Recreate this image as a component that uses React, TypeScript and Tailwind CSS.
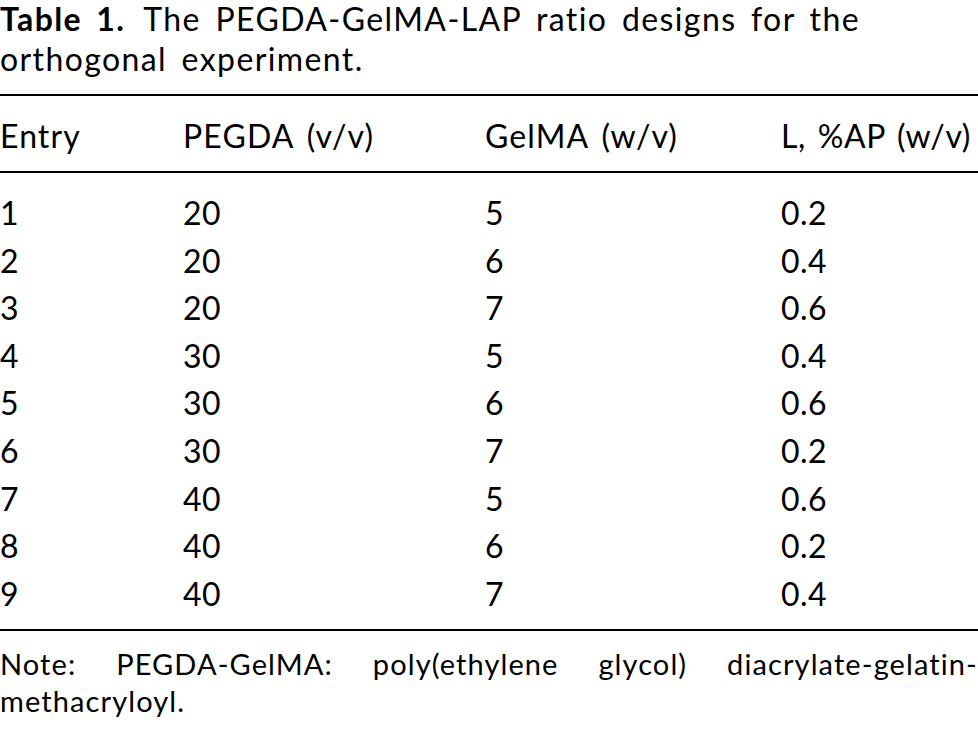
import React from "react";

const rows: [string, string, string, string][] = [
  ["1", "20", "5", "0.2"],
  ["2", "20", "6", "0.4"],
  ["3", "20", "7", "0.6"],
  ["4", "30", "5", "0.4"],
  ["5", "30", "6", "0.6"],
  ["6", "30", "7", "0.2"],
  ["7", "40", "5", "0.6"],
  ["8", "40", "6", "0.2"],
  ["9", "40", "7", "0.4"],
];

export default function App() {
  return (
    <div className="w-[978px] h-[729px] overflow-hidden bg-white text-black font-['Lato','Liberation_Sans',sans-serif] tracking-[1.1px] [word-spacing:4px]">
      <div className="text-[32px] tracking-[1.4px] [word-spacing:5px]">
        <div className="leading-[38px] whitespace-nowrap">
          <span className="font-bold mr-[18px]">Table 1.</span>The PEGDA-GelMA-LAP ratio designs for the
        </div>
        <div className="leading-[42px]">orthogonal experiment.</div>
      </div>
      <div className="mt-[14px] border-t-2 border-black" />
      <div className="grid grid-cols-[183px_302px_296px_1fr] text-[32px] leading-[41px] pt-[19px] pb-[15px]">
        <div>Entry</div>
        <div>PEGDA (v/v)</div>
        <div>GelMA (w/v)</div>
        <div className="whitespace-nowrap tracking-[0.6px] [word-spacing:3px]">L, %AP (w/v)</div>
      </div>
      <div className="border-t-2 border-black" />
      <div className="pt-[16px] pb-[12px] text-[32px] leading-[47.6px] tracking-[0.5px]">
        {rows.map((r) => (
          <div key={r[0]} className="grid grid-cols-[183px_302px_296px_1fr]">
            <div>{r[0]}</div>
            <div>{r[1]}</div>
            <div>{r[2]}</div>
            <div>{r[3]}</div>
          </div>
        ))}
      </div>
      <div className="border-t-2 border-black" />
      <p className="pt-[14px] text-[29px] leading-[37px] text-justify [text-align-last:left]">
        Note: PEGDA-GelMA: poly(ethylene glycol) diacrylate-gelatin-methacryloyl.
      </p>
    </div>
  );
}
